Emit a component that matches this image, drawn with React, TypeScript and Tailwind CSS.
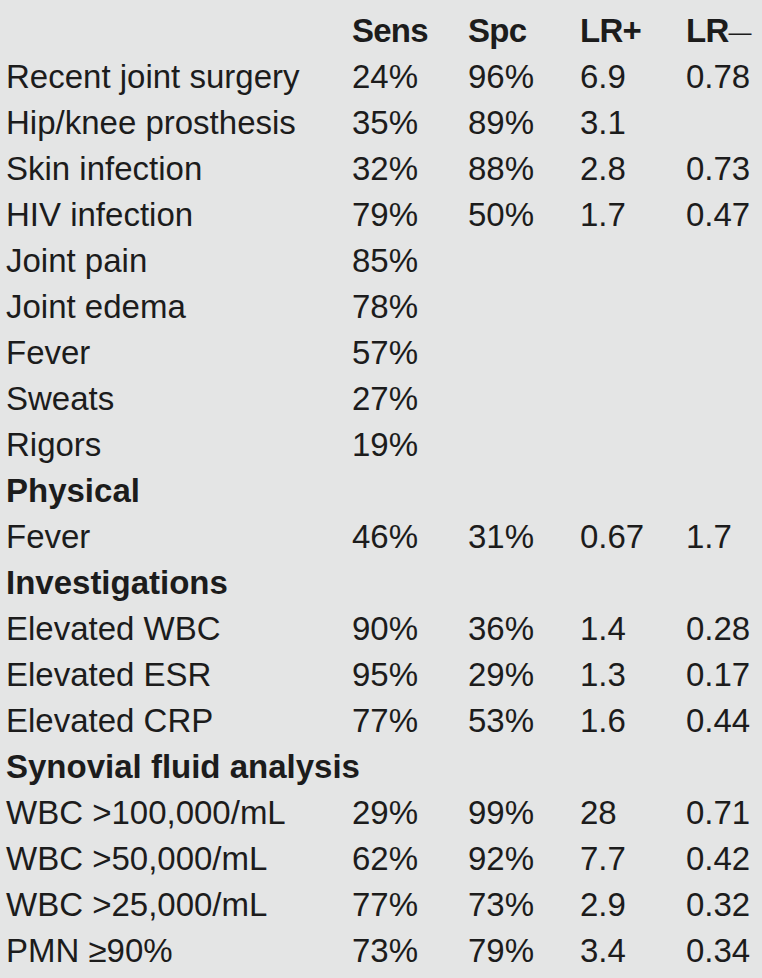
type Row =
  | { kind: "section"; label: string }
  | { kind: "data"; label: string; sens?: string; spc?: string; lrp?: string; lrn?: string };

const rows: Row[] = [
  { kind: "data", label: "Recent joint surgery", sens: "24%", spc: "96%", lrp: "6.9", lrn: "0.78" },
  { kind: "data", label: "Hip/knee prosthesis", sens: "35%", spc: "89%", lrp: "3.1" },
  { kind: "data", label: "Skin infection", sens: "32%", spc: "88%", lrp: "2.8", lrn: "0.73" },
  { kind: "data", label: "HIV infection", sens: "79%", spc: "50%", lrp: "1.7", lrn: "0.47" },
  { kind: "data", label: "Joint pain", sens: "85%" },
  { kind: "data", label: "Joint edema", sens: "78%" },
  { kind: "data", label: "Fever", sens: "57%" },
  { kind: "data", label: "Sweats", sens: "27%" },
  { kind: "data", label: "Rigors", sens: "19%" },
  { kind: "section", label: "Physical" },
  { kind: "data", label: "Fever", sens: "46%", spc: "31%", lrp: "0.67", lrn: "1.7" },
  { kind: "section", label: "Investigations" },
  { kind: "data", label: "Elevated WBC", sens: "90%", spc: "36%", lrp: "1.4", lrn: "0.28" },
  { kind: "data", label: "Elevated ESR", sens: "95%", spc: "29%", lrp: "1.3", lrn: "0.17" },
  { kind: "data", label: "Elevated CRP", sens: "77%", spc: "53%", lrp: "1.6", lrn: "0.44" },
  { kind: "section", label: "Synovial fluid analysis" },
  { kind: "data", label: "WBC >100,000/mL", sens: "29%", spc: "99%", lrp: "28", lrn: "0.71" },
  { kind: "data", label: "WBC >50,000/mL", sens: "62%", spc: "92%", lrp: "7.7", lrn: "0.42" },
  { kind: "data", label: "WBC >25,000/mL", sens: "77%", spc: "73%", lrp: "2.9", lrn: "0.32" },
  { kind: "data", label: "PMN ≥90%", sens: "73%", spc: "79%", lrp: "3.4", lrn: "0.34" },
];

const grid = "grid grid-cols-[346px_116px_112px_106px_1fr] h-[46px] items-center";

export default function App() {
  return (
    <div
      className="min-h-[978px] w-[762px] bg-[#e4e5e5] pl-[6px] pt-[7px] text-[33px] leading-none text-[#1c1c1c]"
      style={{ fontFamily: '"Liberation Sans", Arial, sans-serif' }}
    >
      {/* Header */}
      <div className={`${grid} font-bold tracking-[-0.75px]`}>
        <span />
        <span>Sens</span>
        <span>Spc</span>
        <span>LR+</span>
        <span className="whitespace-nowrap">
          LR
          <span className="align-[2px] text-[23px] font-normal tracking-normal">—</span>
        </span>
      </div>

      {rows.map((row, i) =>
        row.kind === "section" ? (
          <div key={i} className={`${grid} font-bold`}>
            <span className="col-span-5 whitespace-nowrap">{row.label}</span>
          </div>
        ) : (
          <div key={i} className={grid}>
            <span className="whitespace-nowrap">{row.label}</span>
            <span>{row.sens}</span>
            <span>{row.spc}</span>
            <span>{row.lrp}</span>
            <span>{row.lrn}</span>
          </div>
        )
      )}
    </div>
  );
}
